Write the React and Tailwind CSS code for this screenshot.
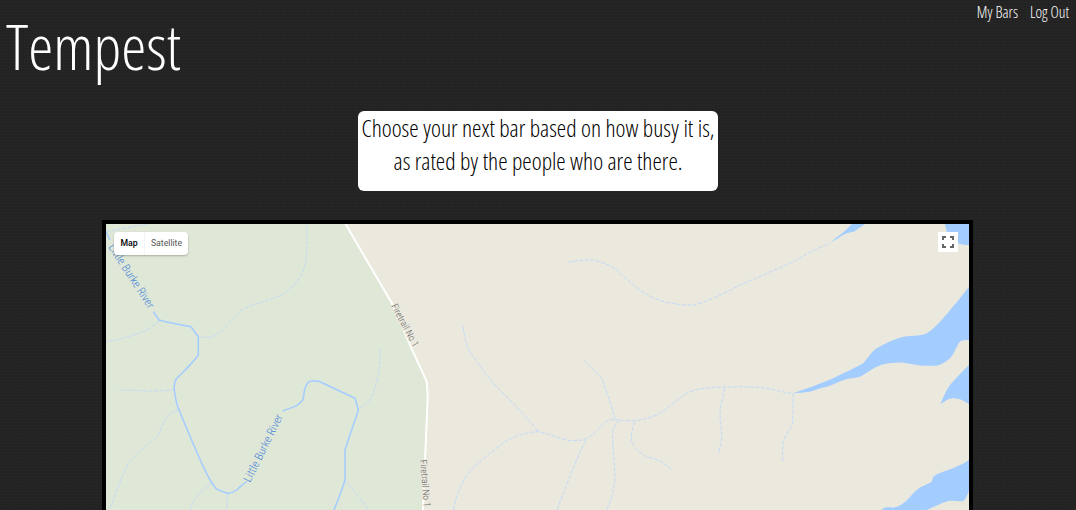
const FONT = "font-['Open_Sans','Liberation_Sans',sans-serif] [font-stretch:75%] font-light";

const STREAMS = [
  "M106 231.7 L146.7 224.3",
  "M306.7 224.3 C307 235 307 245 306.7 251.7 C306 262 304 270 301.7 275 C295 285 288 291 281.7 295 C268 301 252 304 241.7 310 C234 316 228 326 221.7 331.7 C216 335 212 337 208.3 337.7 L198.3 336.7",
  "M159 321 C152 327 146 331 138.3 333.3 C128 337 116 340 106 341.7",
  "M174.3 389.3 C165 391 155 391 145 391 C136 390 127 390 118.3 390.3",
  "M180 409.3 C174 411 170 413 166.7 416.7 C162 424 161 431 156.7 436.7 C147 446 137 453 128.3 463.3 C122 475 116 492 111.7 505 L108 510",
  "M380 350 C380 358 380 367 378.3 375 C376 384 374 393 370 400 C366 404 362 406 358.3 409",
  "M211.7 482.7 C206 488 200 492 195 498.3 C193 502 191 506 190 510",
  "M227.7 493.3 L226.7 510",
  "M345 480.7 C353 489 361 499 368.3 510",
  "M568.3 262.3 C576 261 585 259.5 593.3 260 C602 262 610 265 616.7 270 C624 277 632 284 640 290 C648 296 657 300 666.7 302.3 C676 304 685 305.5 693.3 305 C705 303 725 293 740 285 C758 277 778 269 796.7 260 C808 253 820 247 830 243.3",
  "M463.3 326.7 C464 336 466 344 470 351.7 C478 364 487 376 496.7 386.7 C511 401 526 416 538.3 431.7",
  "M453.3 510 C456 497 460 486 466.7 475 C478 462 492 452 505 441.7 C515 436 526 432 538.3 431.7 C548 433 559 439 570 440.7 C578 441 585 440 590 436.7 C597 432 602 424 608.3 420 C616 419 625 421 633.3 421 C642 420 650 418 656.7 415 C667 410 676 400 686.7 393.3 C694 390 702 388 710 387.7 C720 387 730 387 740 386.7 C750 387 759 387 766.7 388.3 C776 390 784 393 793.3 393.3",
  "M583.3 360 C590 366 596 372 601.7 378.3 C607 392 611 405 615 419",
  "M620 420.7 C616 423 613 427 612.7 431.7 C612 447 615 463 615 478.3 C614 490 611 500 606.7 510",
  "M585.7 440 C581 450 577 459 573.3 468.3 C568 481 562 496 557.3 510",
  "M635 421.7 C632 428 631 435 631.7 441.7 C635 449 640 453 646.7 456.7 C651 458 656 459 660 461 C664 463 668 467 671.7 470",
  "M725 388.3 C723 397 720 406 720 415 C720 423 722 430 721.7 438.3 C721 444 719 449 718.3 454.3",
  "M793.3 393.3 C793 403 793 413 792.7 423.3 C790 430 785 435 783.3 441.7 C782 448 783 455 782.7 462.3",
];

const LAKES = [
  "M793.3 393.3 C808 388 820 384 833.3 378.3 C843 373 853 369 863.3 363.3 C868 358 871 352 876.7 348.3 C884 344 892 340 900 337.7 C910 335 919 337 926.7 333.3 C932 330 936 326 940 321.7 C950 311 960 298 969 286.7 L969 340 C965 340 962 340 960 341.7 C957 344 958 347 956 348.3 C954 352 953 355 950 358.3 C946 362 941 365 936.7 365.7 C930 366 923 366 916.7 365 C910 364 903 362 896.7 362.7 C889 363 882 364 876.7 366.7 C871 369 866 374 860 376.7 C856 378 851 378 846.7 379 C840 381 833 385 826.7 386.7 C821 388 815 390 810 391.7 C804 392.5 798 393 793.3 393.3 Z",
  "M969 365 C962 372 956 378 950 385 C946 391 943 397 940.7 404.3 C945 401 949 398 953.3 398.3 C959 398 964 401 969 404.3 Z",
  "M969 460 C962 465 955 467 948.3 470 C943 472 938 473 933.3 476.7 C932 478 933 480 931.7 481.7 C926 485 921 486 916.7 490 C912 494 908 500 903.3 503.3 C900 506 896 507 893 507.7 C889 507 886 507 883.3 508.3 L881.7 510 L926.7 510 C934 507 941 503 948.3 501 C953 500 958 502 963.3 501 C966 499 968 494 969 490 Z",
  "M831.7 242.3 C837 239 842 235 846.7 233.3 C851 232 854 232 856.7 230 C859 228 862 226 865 224 L851.7 224 C848 228 844 232 840 235 C837 237 834 239 831.7 242.3 Z",
  "M945 224 C945 227 947 229 946.7 231.7 C950 236 954 240 958.3 243.3 C962 245 965 245 969 245 L969 224 Z",
];

const RIVER = "M106 231.7 L110 240 M153.3 311.7 L159 320 C170 323 181 325 191 326.7 L198.3 336.7 L198.3 355 C192 364 184 371 176.7 378.3 C174 382 174 386 174.3 390 C175 396 176 402 178.3 408.3 C186 427 194 446 201.7 463.3 C205 470 208 477 211.7 482.7 L215.7 488.3 C220 491 224 492 227.7 493.3 C231 493 234 492 236.7 490 C240 487 243 484 246.7 481.7 M283 411 L285 410 C290 408 295 407 298.3 404.3 C301 402 303 401 303.3 398.3 C304 394 304 390 305.7 386.7 C307 383 309 381 311.7 381 L318.3 381 L355 398.3 L358.3 410 C354 424 349 437 345 450 L345 480 C342 490 338 500 334 510";

function MapArt() {
  return (
    <svg className="block h-full w-full" viewBox="106 224 863 286" fill="none">
      <rect x="106" y="224" width="863" height="286" fill="#ebe9de" />
      <path d="M106 224 L345.5 224 L391.7 303 L413 351.7 L426.7 381.7 L427.7 396.7 L425 460 L423 510 L106 510 Z" fill="#dfe7d7" />
      {LAKES.map((d) => <path key={d} d={d} fill="#a3ccff" />)}
      {STREAMS.map((d) => <path key={d} d={d} stroke="#c2dbf7" strokeWidth="1" strokeDasharray="4 1.5" />)}
      <path d={RIVER} stroke="#a3ccff" strokeWidth="1.5" strokeLinejoin="round" />
      <path d="M345.5 224 L391.7 303 L413 351.7 L426.7 381.7 L427.7 396.7 L425 460 L423 510" stroke="#ffffff" strokeWidth="2" />
      <g fontFamily="Roboto, sans-serif">
        <text transform="translate(108 247) rotate(57)" fontSize="11.4" fill="#4a86d8">Little Burke River</text>
        <text transform="translate(250 483) rotate(-63.5)" fontSize="11.4" fill="#4a86d8">Little Burke River</text>
        <text transform="translate(391 306) rotate(61.7)" fontSize="9.5" fill="#616161" stroke="#ebe9de" strokeWidth="2" paintOrder="stroke">Firetrail No 1</text>
        <text transform="translate(420 460) rotate(85)" fontSize="9.5" fill="#616161" stroke="#ebe9de" strokeWidth="2" paintOrder="stroke">Firetrail No 1</text>
      </g>
    </svg>
  );
}

export default function App() {
  return (
    <div className={`relative h-[510px] w-full overflow-hidden bg-[#222222] bg-[repeating-linear-gradient(0deg,rgba(255,255,255,0.012)_0px,rgba(255,255,255,0.012)_1px,transparent_1px,transparent_3px),repeating-linear-gradient(90deg,rgba(255,255,255,0.012)_0px,rgba(255,255,255,0.012)_1px,transparent_1px,transparent_3px)] text-white ${FONT}`}>
      <nav className="absolute right-[7px] top-[2px] flex gap-3 text-[15.7px] leading-5">
        <span>My Bars</span>
        <span>Log Out</span>
      </nav>
      <header className="pl-[6px] pt-[8px]">
        <h1 className="text-[63.3px] leading-[75px]">Tempest</h1>
      </header>
      <div className="mt-[28px] flex justify-center">
        <p className="w-[360px] rounded-md bg-white pb-[13px] pt-px text-center text-[23.7px] leading-[33px] text-black">
          Choose your next bar based on how busy it is,<br />as rated by the people who are there.
        </p>
      </div>
      <section className="relative ml-[102px] mt-[29px] h-[290px] w-[871px] border-4 border-b-0 border-black">
        <MapArt />
        <div className="absolute left-2 top-2 flex h-[23px] w-[74px] items-center rounded-sm bg-white font-['Roboto',sans-serif] text-[8.7px] [font-stretch:100%] shadow-[0_1px_2px_rgba(0,0,0,0.25)]">
          <span className="flex h-full w-[31px] items-center justify-center border-r border-[#f3f3f3] font-medium text-black">Map</span>
          <span className="flex h-full flex-1 items-center justify-center font-normal text-[#565656]">Satellite</span>
        </div>
        <div className="absolute right-[11px] top-2 flex h-5 w-5 items-center justify-center bg-white">
          <svg width="12" height="12" viewBox="0 0 12 12" fill="none" stroke="#666666" strokeWidth="2">
            <path d="M1 4V1H4M8 1H11V4M11 8V11H8M4 11H1V8" />
          </svg>
        </div>
      </section>
    </div>
  );
}
